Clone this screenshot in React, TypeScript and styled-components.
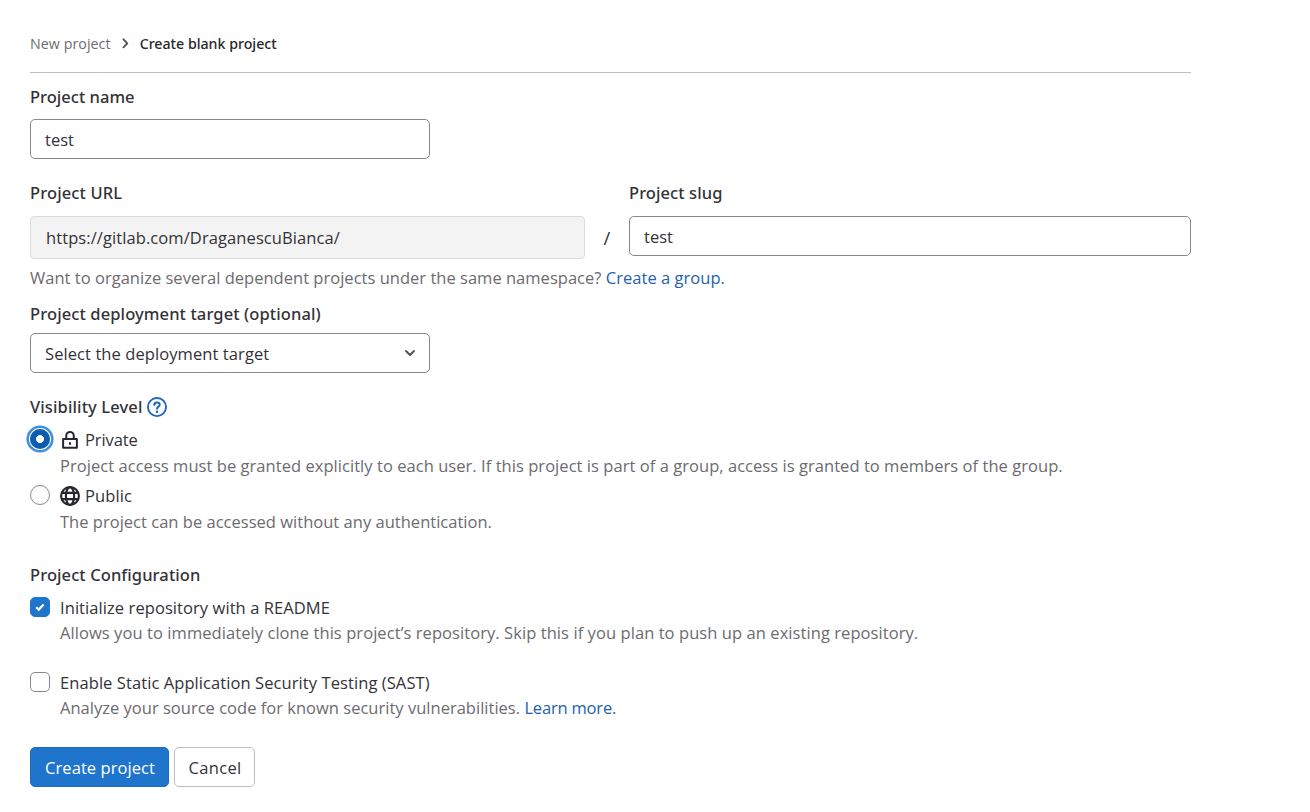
import React from "react";
import styled, { createGlobalStyle, css } from "styled-components";

const Global = createGlobalStyle`
  *, *::before, *::after { box-sizing: border-box; }
  body {
    margin: 0;
    background: #fff;
    color: #333238;
    font: 400 16.5px/24px "Open Sans", "Noto Sans", sans-serif;
  }
`;

interface TrackProps { $track?: number }
const tracking = css<TrackProps>`letter-spacing: ${p => p.$track ?? 0}px;`;

const Page = styled.main`
  width: 1221px;
  padding: 0 30px;
  white-space: nowrap;
`;

const Breadcrumb = styled.nav`
  display: flex;
  align-items: center;
  height: 73px;
  padding: 16px 0 1px;
  border-bottom: 1px solid #bfbfbf;
  font-size: 14.2px;
`;
const Crumb = styled.span<TrackProps>`
  color: #6c6b70;
  ${tracking}
`;
const CurrentCrumb = styled.span<TrackProps>`
  color: #28272d;
  font-family: "Noto Sans", sans-serif;
  font-weight: 500;
  ${tracking}
`;
const CrumbChevron = styled.svg`
  width: 10px;
  height: 12px;
  margin: 0 10px 0 9px;
`;

const Field = styled.section<{ $top: number; $gap: number; $width?: string }>`
  display: flex;
  flex-direction: column;
  gap: ${p => p.$gap}px;
  width: ${p => p.$width ?? "auto"};
  margin-top: ${p => p.$top}px;
`;
const Label = styled.label<TrackProps>`
  display: flex;
  align-items: center;
  height: 24px;
  font-family: "Noto Sans", sans-serif;
  font-weight: 500;
  ${tracking}
`;
const TextInput = styled.input`
  width: 100%;
  height: 40px;
  padding: 1px 14px 0;
  border: 1px solid #89888d;
  border-radius: 5px;
  background: #fff;
  color: #333238;
  font: inherit;
  outline: none;
`;
const UrlPrefix = styled.div<TrackProps>`
  height: 43px;
  padding: 9px 15px;
  border: 1px solid #dcdcde;
  border-radius: 4px;
  background: #f3f3f3;
  ${tracking}
`;
const UrlRow = styled.div`
  display: grid;
  grid-template-columns: 555px 44px 562px;
  margin-top: 22px;
`;
const Slash = styled.span`
  align-self: end;
  height: 34px;
  font-size: 18.5px;
  line-height: 26px;
  text-align: center;
`;
const Help = styled.p<TrackProps & { $top?: number }>`
  height: 24px;
  margin: ${p => p.$top ?? 0}px 0 0;
  color: #6c6b70;
  ${tracking}
`;
const Link = styled.a<TrackProps>`
  color: #2361b0;
  text-decoration: none;
  ${tracking}
`;
const Select = styled.button<TrackProps>`
  display: flex;
  align-items: center;
  justify-content: space-between;
  width: 100%;
  height: 40px;
  padding: 1px 13px 0 14px;
  border: 1px solid #89888d;
  border-radius: 5px;
  background: #fff;
  color: #333238;
  font: inherit;
  ${tracking}
`;
const SelectChevron = styled.svg`
  width: 12px;
  height: 8px;
  margin-top: -2px;
`;
const HelpIcon = styled.svg`
  width: 20px;
  height: 20px;
  margin-left: 4px;
`;
const Heading = styled.h2<TrackProps & { $top: number }>`
  display: flex;
  align-items: center;
  height: 24px;
  margin: ${p => p.$top}px 0 0;
  font: 500 16.5px/24px "Noto Sans", sans-serif;
  ${tracking}
`;
const Option = styled.div<{ $top: number; $gap: number }>`
  display: grid;
  grid-template-columns: 20px 1fr;
  column-gap: 10px;
  row-gap: ${p => p.$gap}px;
  margin-top: ${p => p.$top}px;
`;
const OptionText = styled.div<TrackProps>`
  display: flex;
  align-items: center;
  height: 24px;
  ${tracking}
`;
const OptionHelp = styled(Help)`
  grid-column: 2;
`;
const OptionIcon = styled.svg`
  width: 20px;
  height: 20px;
  margin-right: 5px;
`;
const Radio = styled.span<{ $checked?: boolean }>`
  width: 20px;
  height: 20px;
  margin-top: 1px;
  border-radius: 50%;
  ${p => p.$checked
    ? css`
        background: radial-gradient(circle, #fff 3.6px, #0b5cad 4.3px);
        box-shadow: 0 0 0 1px #fff, 0 0 0 3.6px #428fdc;
      `
    : css`border: 1px solid #89888d;`}
`;
const Checkbox = styled.span<{ $checked?: boolean }>`
  display: grid;
  place-items: center;
  width: 20px;
  height: 20px;
  margin-top: 1px;
  border: 1px solid ${p => (p.$checked ? "#1f75cb" : "#89888d")};
  border-radius: 5px;
  background: ${p => (p.$checked ? "#1f75cb" : "#fff")};
`;
const Actions = styled.div`
  display: flex;
  gap: 5px;
  margin-top: 27px;
`;
const Button = styled.button<TrackProps & { $primary?: boolean; $width: number }>`
  width: ${p => p.$width}px;
  height: 40px;
  padding: 1px 0 0 1px;
  border: 1px solid ${p => (p.$primary ? "#1a6dc2" : "#bfbfc3")};
  border-radius: 5px;
  background: ${p => (p.$primary ? "#1f75cb" : "#fff")};
  color: ${p => (p.$primary ? "#fff" : "#333238")};
  font: inherit;
  ${tracking}
`;

export default function App() {
  return (
    <>
      <Global />
      <Page>
        <Breadcrumb>
          <Crumb $track={0.08}>New project</Crumb>
          <CrumbChevron viewBox="0 0 10 12" fill="none" stroke="#535158" strokeWidth="1.9" strokeLinecap="round" strokeLinejoin="round">
            <path d="M3.5 1.3 7.3 5.3 3.5 9.3" />
          </CrumbChevron>
          <CurrentCrumb>Create blank project</CurrentCrumb>
        </Breadcrumb>

        <Field $top={12} $gap={10} $width="400px">
          <Label $track={0.02}>Project name</Label>
          <TextInput defaultValue="test" />
        </Field>

        <UrlRow>
          <Field $top={0} $gap={11}>
            <Label $track={0.12}>Project URL</Label>
            <UrlPrefix $track={0.088}>https://gitlab.com/DraganescuBianca/</UrlPrefix>
          </Field>
          <Slash>/</Slash>
          <Field $top={0} $gap={11}>
            <Label $track={0.08}>Project slug</Label>
            <TextInput defaultValue="test" />
          </Field>
        </UrlRow>
        <Help $top={7} $track={0.02}>
          Want to organize several dependent projects under the same namespace?{" "}
          <Link $track={0.04}>Create a group.</Link>
        </Help>

        <Field $top={12} $gap={7} $width="400px">
          <Label $track={0.11}>Project deployment target (optional)</Label>
          <Select $track={0.084}>
            Select the deployment target
            <SelectChevron viewBox="0 0 12 8" fill="none" stroke="#535158" strokeWidth="1.9" strokeLinecap="round" strokeLinejoin="round">
              <path d="M2 2 6 6 10 2" />
            </SelectChevron>
          </Select>
        </Field>

        <Heading $top={22} $track={0.12}>
          Visibility Level
          <HelpIcon viewBox="0 0 16 16" fill="none" stroke="#1f67ba" strokeWidth="1.5">
            <circle cx="8" cy="8" r="7.25" />
            <path d="M5.8 6.3C5.9 5 6.8 4.3 8 4.3s2.2.8 2.2 1.9c0 1.5-2.2 1.5-2.2 3.1" strokeLinecap="round" strokeWidth="1.6" />
            <circle cx="8" cy="11.7" r="1" fill="#1f67ba" stroke="none" />
          </HelpIcon>
        </Heading>
        <Option $top={9} $gap={2}>
          <Radio $checked />
          <OptionText $track={-0.1}>
            <OptionIcon viewBox="0 0 16 16" fill="none" stroke="#28272d" strokeWidth="1.6">
              <path d="M2.5 7.25h11v7h-11zM5 7V4.5a3 3 0 0 1 6 0V7" strokeLinejoin="round" />
              <path d="M8 9.8v2" />
            </OptionIcon>
            Private
          </OptionText>
          <OptionHelp $track={0.048}>Project access must be granted explicitly to each user. If this project is part of a group, access is granted to members of the group.</OptionHelp>
        </Option>
        <Option $top={6} $gap={2}>
          <Radio />
          <OptionText $track={0.1}>
            <OptionIcon viewBox="0 0 16 16" fill="none" stroke="#28272d" strokeWidth="1.7">
              <circle cx="8" cy="8" r="7.15" />
              <ellipse cx="8" cy="8" rx="3.3" ry="7.15" />
              <path d="M1.3 5.5h13.4M1.3 10.5h13.4" />
            </OptionIcon>
            Public
          </OptionText>
          <OptionHelp $track={0.018}>The project can be accessed without any authentication.</OptionHelp>
        </Option>

        <Heading $top={29} $track={0.09}>Project Configuration</Heading>
        <Option $top={9} $gap={1}>
          <Checkbox $checked>
            <svg width="12" height="10" viewBox="0 0 12 10" fill="none" stroke="#fff" strokeWidth="2.2">
              <path d="M2.2 5.2 4.8 7.6 9.6 2.6" />
            </svg>
          </Checkbox>
          <OptionText $track={0.076}>Initialize repository with a README</OptionText>
          <OptionHelp $track={0.07}>Allows you to immediately clone this project’s repository. Skip this if you plan to push up an existing repository.</OptionHelp>
        </Option>
        <Option $top={26} $gap={1}>
          <Checkbox />
          <OptionText $track={0.081}>Enable Static Application Security Testing (SAST)</OptionText>
          <OptionHelp $track={0.015}>
            Analyze your source code for known security vulnerabilities.{" "}
            <Link $track={-0.18}>Learn more.</Link>
          </OptionHelp>
        </Option>

        <Actions>
          <Button $primary $width={139} $track={0.06}>Create project</Button>
          <Button $width={81} $track={0.35}>Cancel</Button>
        </Actions>
      </Page>
    </>
  );
}
